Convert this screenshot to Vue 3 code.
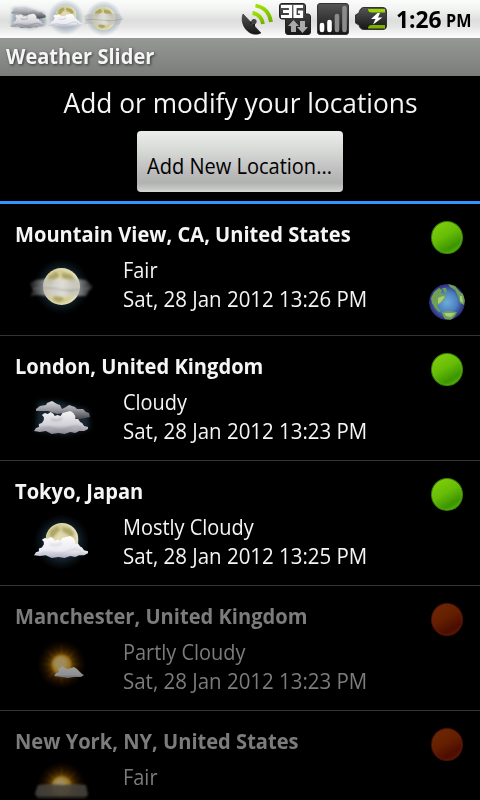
<script setup>
const places = [
  { name: 'Mountain View, CA, United States', cond: 'Fair', time: 'Sat, 28 Jan 2012 13:26 PM', icon: 'fair-night', on: true, here: true },
  { name: 'London, United Kingdom', cond: 'Cloudy', time: 'Sat, 28 Jan 2012 13:23 PM', icon: 'cloudy', on: true },
  { name: 'Tokyo, Japan', cond: 'Mostly Cloudy', time: 'Sat, 28 Jan 2012 13:25 PM', icon: 'mostly-cloudy', on: true },
  { name: 'Manchester, United Kingdom', cond: 'Partly Cloudy', time: 'Sat, 28 Jan 2012 13:23 PM', icon: 'partly-cloudy', on: false },
  { name: 'New York, NY, United States', cond: 'Fair', icon: 'fair-day', on: false },
]
const notifications = ['cloudy', 'mostly-cloudy', 'fair-night']
const rays = Array.from({ length: 16 }, (_, i) => i * 22.5)
</script>

<template>
  <div class="screen">
    <svg class="defs" width="0" height="0">
      <defs>
        <radialGradient id="moonFill" cx=".45" cy=".5" r=".55">
          <stop offset="0" stop-color="#e4dfb8" /><stop offset=".75" stop-color="#d3cc98" /><stop offset="1" stop-color="#e9e8c6" />
        </radialGradient>
        <radialGradient id="halo">
          <stop offset=".6" stop-color="#3e6784" stop-opacity=".34" /><stop offset="1" stop-color="#27465f" stop-opacity="0" />
        </radialGradient>
        <linearGradient id="white" x2="0" y2="1">
          <stop offset="0" stop-color="#fff" /><stop offset=".7" stop-color="#e9e9f0" /><stop offset="1" stop-color="#a9abc0" />
        </linearGradient>
        <linearGradient id="grey" x2="0" y2="1">
          <stop offset="0" stop-color="#f4f4f6" /><stop offset=".6" stop-color="#d2d2d8" /><stop offset="1" stop-color="#85828d" />
        </linearGradient>
        <linearGradient id="dark" x2="0" y2="1">
          <stop offset="0" stop-color="#dcdce0" /><stop offset=".5" stop-color="#96969c" /><stop offset="1" stop-color="#48474e" />
        </linearGradient>
        <linearGradient id="mist">
          <stop offset="0" stop-color="#999" stop-opacity=".2" /><stop offset=".25" stop-color="#c0c0c0" stop-opacity=".7" />
          <stop offset=".5" stop-color="#dededc" stop-opacity=".9" /><stop offset=".75" stop-color="#c0c0c0" stop-opacity=".7" /><stop offset="1" stop-color="#999" stop-opacity=".2" />
        </linearGradient>
        <radialGradient id="sunGlow">
          <stop offset="0" stop-color="#ffe27a" /><stop offset=".3" stop-color="#f2a810" stop-opacity=".95" />
          <stop offset=".6" stop-color="#a65c00" stop-opacity=".5" /><stop offset="1" stop-color="#5a2500" stop-opacity="0" />
        </radialGradient>
        <radialGradient id="ray" gradientUnits="userSpaceOnUse" cx="30" cy="30" r="25">
          <stop offset=".3" stop-color="#ffb820" /><stop offset="1" stop-color="#a05000" stop-opacity="0" />
        </radialGradient>
        <filter id="soft" x="-30%" y="-50%" width="160%" height="200%"><feGaussianBlur stdDeviation="1.2" /></filter>
        <filter id="slight" x="-30%" y="-50%" width="160%" height="200%"><feGaussianBlur stdDeviation=".8" /></filter>
        <filter id="softer" x="-30%" y="-50%" width="160%" height="200%"><feGaussianBlur stdDeviation="2.6" /></filter>
        <linearGradient id="ink" x2="0" y2="1"><stop offset="0" stop-color="#555" /><stop offset="1" stop-color="#151515" /></linearGradient>
        <linearGradient id="lime" x2="0" y2="1"><stop offset="0" stop-color="#a0e000" /><stop offset="1" stop-color="#6fae00" /></linearGradient>
        <radialGradient id="sea"><stop offset="0" stop-color="#6fabdc" /><stop offset=".55" stop-color="#4c82c0" /><stop offset="1" stop-color="#2c2874" /></radialGradient>
        <clipPath id="globe"><circle cx="18" cy="18" r="18" /></clipPath>
      </defs>

      <symbol id="bigcloud" viewBox="0 0 56 23" preserveAspectRatio="none">
        <path d="M0 20 2 17 5 16 5 13 8 12 10 9 10 6 8 4 11 2 14 3 17 1 20 3 21 5 24 4 27 5 29 2 33 1 37 0 40 2 42 5 42 8 45 8 47 11 49 12 51 15 55 16 55 18 51 20 46 20 42 22 37 21 31 23 25 22 18 23 12 20 6 21Z" />
      </symbol>

      <symbol id="moon" viewBox="0 0 40 40">
        <circle cx="20" cy="20" r="20" fill="url(#moonFill)" />
        <g fill="#9c934d" opacity=".7" filter="url(#soft)">
          <path d="M6 9 14 4 18 8 13 13 9 18 5 16ZM20 5 30 7 35 13 31 17 26 13 21 11ZM12 29 19 30 23 34 17 37 11 34ZM27 22 33 24 30 28 26 26Z" />
        </g>
      </symbol>

      <symbol id="fair-night" viewBox="0 0 72 72">
        <circle cx="35.5" cy="36.5" r="28" fill="url(#halo)" />
        <use href="#moon" x="17" y="18" width="37" height="37" />
        <path d="M4 33 10 30 20 29 36 29.500 50 29 60 30 64 34 67 37 63 41 60 46 48 46 34 46.500 22 46 12 45 4 46 7 41Z" fill="url(#mist)" filter="url(#slight)" />
        <path d="M7 39Q20 37 34 39.500T64 38" fill="none" stroke="#888" stroke-width="1.5" stroke-opacity=".4" filter="url(#slight)" />
      </symbol>

      <symbol id="cloudy" viewBox="0 0 72 72">
        <path d="M12 20 32 19 62 28 64 47 40 53 10 49 11 34Z" fill="#3d647e" opacity=".4" filter="url(#softer)" />
        <path d="M10 27 14 24 20 23 21 21 26 19 31 22 34 23 36 27 40 25 43 23 49 25 51 27 57 27 60 30 63 31 64 35 59 36 54 37 45 36 38 31 31 32 22 29 17 29 10 29Z" fill="url(#dark)" />
        <use href="#bigcloud" x="8" y="29" width="55" height="23" fill="url(#grey)" />
        <path d="M15 47Q22 44 28 47T43 46 56 47M25 37Q31 40 36 36" fill="none" stroke="#83828d" stroke-width="2" opacity=".4" filter="url(#soft)" />
      </symbol>

      <symbol id="mostly-cloudy" viewBox="0 0 72 72">
        <circle cx="35.5" cy="35" r="28" fill="url(#halo)" />
        <use href="#moon" x="19.5" y="16" width="33" height="33" />
        <use href="#bigcloud" x="8" y="29" width="55" height="22" fill="url(#white)" />
        <path d="M15 46Q22 44 28 46T43 44 56 46M24 37Q30 40 36 36" fill="none" stroke="#a7a8b8" stroke-width="1.6" opacity=".4" filter="url(#soft)" />
      </symbol>

      <symbol id="sun" viewBox="0 0 60 60">
        <circle cx="30" cy="30" r="25" fill="url(#sunGlow)" opacity=".8" />
        <g filter="url(#slight)">
          <path v-for="(a, i) in rays" :key="a" :d="i % 2 ? 'M28.5 30 30 9 31.5 30Z' : 'M28 30 30 5 32 30Z'" fill="url(#ray)" opacity=".5" :transform="`rotate(${a} 30 30)`" />
        </g>
        <circle cx="30" cy="30" r="9.5" fill="#ffc23c" filter="url(#soft)" />
        <circle cx="29" cy="29" r="6.5" fill="#ffe296" filter="url(#soft)" />
      </symbol>

      <symbol id="partly-cloudy" viewBox="0 0 72 72">
        <use href="#sun" x="5.5" y="2.5" width="60" height="60" />
        <path d="M28 44 30 41 33 40 32 37 35 36 36 34 39 36 42 37 45 36 48 35 51 37 54 40 56 42 58 43 55 45 48 45 42 46 36 45Z" fill="url(#white)" />
      </symbol>

      <symbol id="fair-day" viewBox="0 0 72 72">
        <use href="#sun" x="5.5" y="-1" width="60" height="60" />
        <path d="M12 28 24 27 36 28 49 27 60 28 62 38 58 44 36 46 12 44 9 36Z" fill="#716b62" opacity=".9" filter="url(#soft)" />
      </symbol>

      <symbol id="earth" viewBox="0 0 36 36">
        <g clip-path="url(#globe)">
          <circle cx="18" cy="18" r="18" fill="url(#sea)" />
          <g filter="url(#land)">
            <path d="M2 14 5 8 10 4 13 6 12 9 16 11 18 12 14 17 11 20 8 21 9 24 12 27 10 28 6 24 3 19ZM13 4 17 4 18 8 16 9ZM19 0 26 2 31 8 34 10 36 16 35 21 31 19 29 12 26 6 21 3ZM13 28 19 27 28 28 26 32 22 36 16 35 14 32Z" fill="#6f9f58" />
            <path d="M9 14 14 12 16 13 12 18 9 20ZM15 29 26 29 22 33 17 32ZM31 12 33 12 34 19 31 17Z" fill="#a8cc78" />
          </g>
        </g>
      </symbol>
      <filter id="land"><feGaussianBlur stdDeviation=".4" /></filter>
    </svg>

    <header class="status">
      <div class="notes">
        <svg v-for="n in notifications" :key="n" class="note"><use :href="'#' + n" /></svg>
      </div>
      <div class="system">
        <svg class="sys" viewBox="0 0 32 32">
          <path d="M2 11C-1 19 4 29 12 31Q17 32 20 30Z" fill="url(#ink)" stroke="#222" stroke-width=".6" />
          <path d="M9 20 13 18.500 13 24" stroke="#222" stroke-width="2" fill="none" />
          <circle cx="13" cy="18.500" r="2.600" fill="#444" />
          <g fill="none" stroke="url(#lime)" stroke-width="3.800">
            <path d="M11.500 10Q20 11 22 21" /><path d="M14.500 2.500Q28 5 30 19" />
          </g>
        </svg>
        <svg class="sys" viewBox="0 0 32 32">
          <path d="M3 .5H24Q26.500 .5 26.500 3V11H29Q31.500 11 31.500 14V29Q31.500 31.500 29 31.500H9Q6.500 31.500 6.500 29V16H3Q.5 16 .5 13V3Q.5 .5 3 .5Z" fill="url(#ink)" stroke="#222" />
          <path d="M2 3.500H11.500V13.500H2M4 8.500H11.500M24 3.500H16V13.500H22.500V9H19" fill="none" stroke="#fff" stroke-width="3.200" />
          <path d="M9 23 14.500 17 20 23H17V29H12V23ZM18 24H21V18H26V24H29L23.500 30Z" fill="#aaa" />
        </svg>
        <svg class="sys" viewBox="0 0 32 32">
          <rect x=".5" y=".5" width="31" height="31" rx="2.500" fill="url(#ink)" stroke="#333" />
          <g stroke-width="4.600" stroke-linecap="round">
            <path d="M5 22V27M12.500 19V27" stroke="#fff" /><path d="M20 13V27M27.500 5V27" stroke="#8b8b8b" />
          </g>
        </svg>
        <svg class="sys" viewBox="0 0 32 32">
          <path d="M9 4.500H28Q31.500 4.500 31.500 8V23Q31.500 26.500 28 26.500H9Q5 26.500 4 22L.5 20V12L4 10Q5 4.500 9 4.500Z" fill="url(#ink)" stroke="#333" />
          <path d="M13 6H30V9.500H17Q13 9.500 13 6Z" fill="#98d800" /><path d="M13 25.500H30V22H17Q13 22 13 25.500Z" fill="#7db300" />
          <path d="M22.500 10 16 16H20.500L18 21.500 27.500 14.500H23L25 10Z" fill="#fff" />
        </svg>
        <span class="clock">1:26</span><span class="pm">PM</span>
      </div>
    </header>

    <div class="titlebar"><span>Weather Slider</span></div>

    <section class="top">
      <h1>Add or modify your locations</h1>
      <button><span>Add New Location...</span></button>
    </section>

    <main class="list">
      <article v-for="p in places" :key="p.name" class="row" :class="{ off: !p.on, tall: p.here }">
        <div class="info">
          <h2>{{ p.name }}</h2>
          <div class="weather">
            <svg class="wx"><use :href="'#' + p.icon" /></svg>
            <div class="lines"><p class="cond">{{ p.cond }}</p><p v-if="p.time">{{ p.time }}</p></div>
          </div>
        </div>
        <div class="marks">
          <i class="dot"></i>
          <svg v-if="p.here" class="globe"><use href="#earth" /></svg>
        </div>
      </article>
    </main>
    <div class="fade"></div>
  </div>
</template>

<style>
body { background: #000; }
</style>

<style scoped>
.screen { position: relative; width: 480px; height: 800px; overflow: hidden; background: #000; color: #f5f5f5; font-family: "Open Sans", "Noto Sans", sans-serif; display: flex; flex-direction: column; }
.defs { position: absolute; }
.status { height: 38px; flex: none; display: flex; justify-content: space-between; align-items: center; overflow: hidden; background: linear-gradient(#fbfdfb, #f1f2f1 25%, #dcdedc 55%, #e4e5e4 70%, #f9faf9 96%); }
.notes { display: flex; padding-left: 5px; }
.note { width: 46px; height: 46px; margin-right: -8px; margin-top: -2px; }
.system { display: flex; align-items: center; color: #000; width: 239px; white-space: nowrap; }
.sys { width: 32px; height: 32px; margin-right: 6px; margin-top: -1px; flex: none; }
.clock { margin-left: 3px; width: 50px; flex: none; font: bold 24px/38px "Open Sans", sans-serif; transform: scaleX(.95); transform-origin: 0 0; }
.pm { font: bold 17px/38px "Open Sans", sans-serif; padding-top: 4px; transform: scaleX(.95); transform-origin: 0 0; }
.titlebar { height: 38px; flex: none; background: linear-gradient(#969896, #7b7d7b); font: bold 21px/37px "Open Sans", sans-serif; padding-left: 6px; text-shadow: 1px 1px 3px #333; color: #f5f5f5; }
.titlebar span { display: block; transform: scaleX(.955); transform-origin: 0 0; }
.top { height: 125px; flex: none; border-bottom: 3px solid #3394ff; display: flex; flex-direction: column; align-items: center; }
h1 { margin: 0; padding-left: 1px; height: 55px; font-size: 27px; line-height: 54px; font-weight: 400; white-space: nowrap; transform: scaleX(.975); }
button { width: 206px; height: 61px; padding: 8px 0 0; border: 0; border-radius: 4px; background: linear-gradient(#eceeec, #d5d7d5 35%, #b9bab9 70%, #b0b2b0 85%, #c9cbc9 96%, #d8dad8); font: 21px/54px "Open Sans", sans-serif; white-space: nowrap; color: #000; }
button span { display: block; transform: translateX(-.5px) scaleX(.953); }
.list { flex: none; }
.row { height: 124px; display: flex; justify-content: space-between; border-bottom: 1px solid #333; }
.tall { height: 131px; }
.info { padding: 15px 0 0 15px; }
h2 { margin: 0; font-size: 21px; line-height: 31px; font-weight: 700; white-space: nowrap; transform: scaleX(.957); transform-origin: 0 0; }
.weather { display: flex; padding-left: 11px; }
.wx { width: 72px; height: 72px; }
.lines { padding: 5px 0 0 25px; }
p { margin: 0; font-size: 22px; line-height: 29px; white-space: nowrap; transform: scaleX(.93); transform-origin: 0 0; }
.cond { transform: scaleX(.906); }
.marks { width: 36px; padding: 17px 15px 0 0; display: flex; flex-direction: column; align-items: center; gap: 30px; }
.dot { width: 32px; height: 33px; box-sizing: border-box; border-radius: 50%; border: 1px solid #3d8600; margin-right: 1px; background: linear-gradient(150deg, #85d20c, #67bc05 45%, #3c9500 75%, #52b50a); box-shadow: inset 0 0 2px 0 #7dc833; }
.globe { width: 36px; height: 36px; }
.off h2, .off .lines { color: #7c7c7c; }
.off .wx { opacity: .62; }
.off .dot { border-color: #4c1205; background: linear-gradient(150deg, #702a06, #641f00 45%, #4c0d00 75%, #581806); box-shadow: inset 0 0 2px 0 #702912; }
.fade { position: absolute; left: 0; right: 0; bottom: 0; height: 5px; background: linear-gradient(transparent, #000); }
</style>
